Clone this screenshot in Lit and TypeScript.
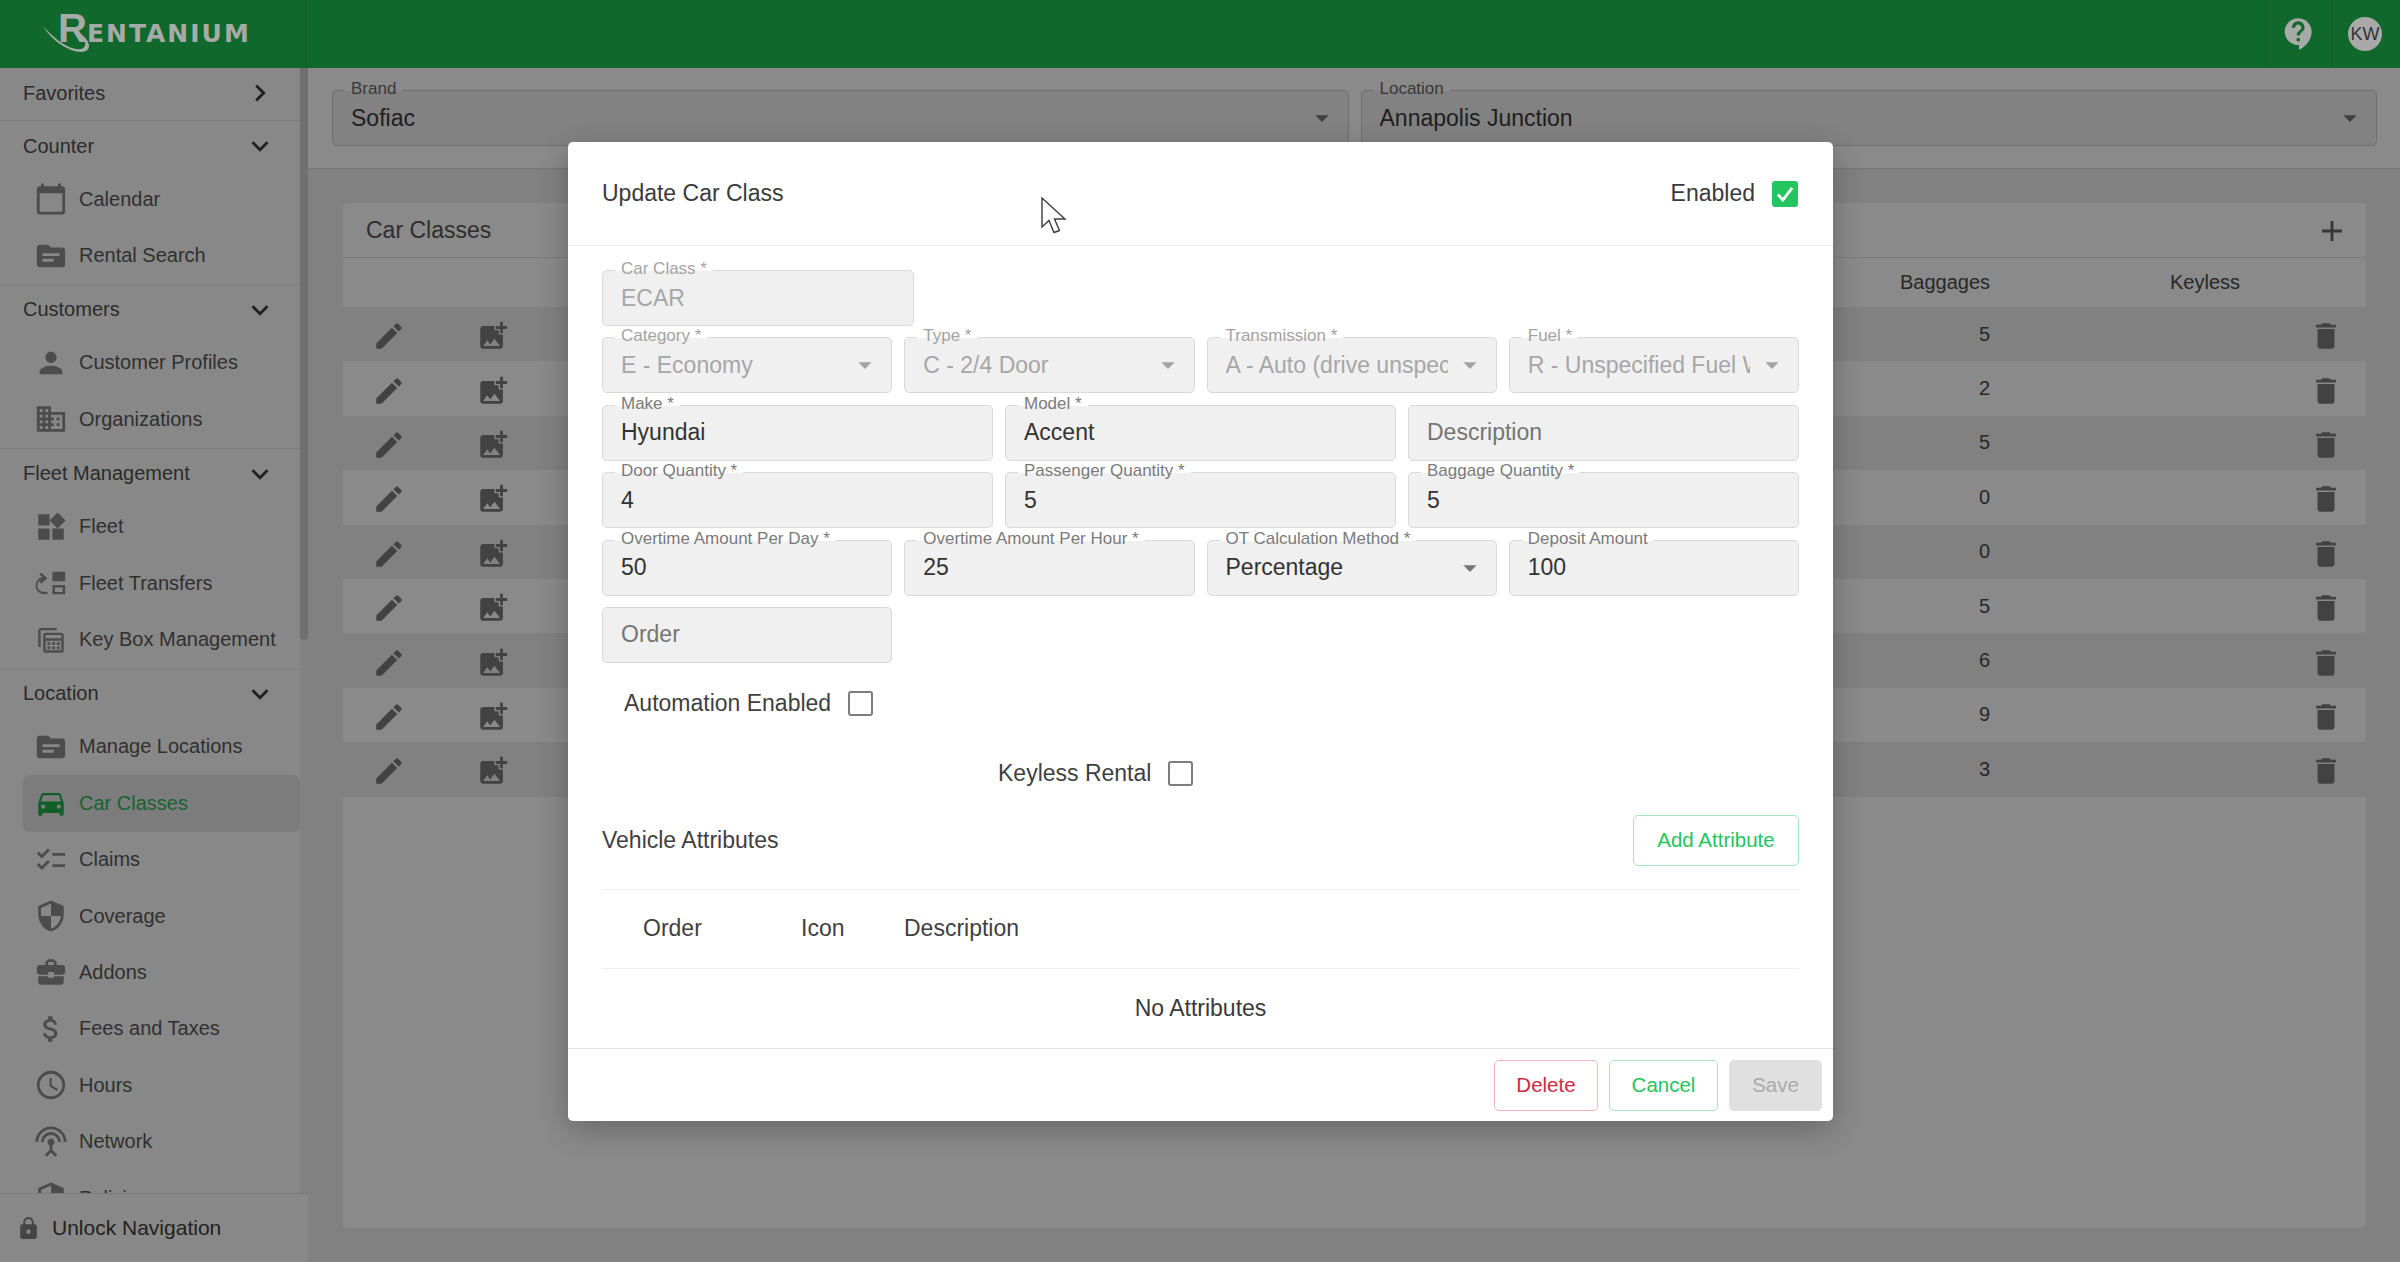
import {LitElement, html, css} from 'lit';
import {customElement} from 'lit/decorators.js';

const P: Record<string, string> = {
  right: 'M10 6 8.59 7.41 13.17 12l-4.58 4.59L10 18l6-6z',
  down: 'M16.59 8.59 12 13.17 7.41 8.59 6 10l6 6 6-6z',
  calendar: 'M20 3h-1V1h-2v2H7V1H5v2H4c-1.1 0-2 .9-2 2v16c0 1.1.9 2 2 2h16c1.1 0 2-.9 2-2V5c0-1.1-.9-2-2-2zm0 18H4V8h16v13z',
  topic: 'M20 6h-8l-2-2H4c-1.1 0-1.99.9-1.99 2L2 18c0 1.1.9 2 2 2h16c1.1 0 2-.9 2-2V8c0-1.1-.9-2-2-2zm-6 10H6v-2h8v2zm4-4H6v-2h12v2z',
  person: 'M12 12c2.21 0 4-1.79 4-4s-1.79-4-4-4-4 1.79-4 4 1.79 4 4 4zm0 2c-2.67 0-8 1.34-8 4v2h16v-2c0-2.66-5.33-4-8-4z',
  domain: 'M12 7V3H2v18h20V7H12zM6 19H4v-2h2v2zm0-4H4v-2h2v2zm0-4H4V9h2v2zm0-4H4V5h2v2zm4 12H8v-2h2v2zm0-4H8v-2h2v2zm0-4H8V9h2v2zm0-4H8V5h2v2zm10 12h-8v-2h2v-2h-2v-2h2v-2h-2V9h8v10zm-2-8h-2v2h2v-2zm0 4h-2v2h2v-2z',
  widgets: 'M13 13v8h8v-8h-8zM3 21h8v-8H3v8zM3 3v8h8V3H3zm13.66-1.31L11 7.34 16.66 13l5.66-5.66-5.66-5.65z',
  transfer: 'M13 4h9v6.8h-9zM13 13.4h9V20h-9zM14.8 15.1v3.2h5.4v-3.2zM9.5 18.2V20H7.4a6.2 6.2 0 0 1-1.6-12.2L3.9 6 5 4.6 9.4 8.6 5 12.6 3.9 11.2 5.6 9.6A4.4 4.4 0 0 0 7.4 18.2z',
  keybox: 'M16 3.5H5A2 2 0 0 0 3 5.5V17H4.7V5.2H16zM8.5 6.8h10.5a2 2 0 0 1 2 2V19a2 2 0 0 1-2 2H8.5a2 2 0 0 1-2-2V8.8a2 2 0 0 1 2-2zM8.2 8.5V10.8H19.3V8.5zM8.2 12.5V19.3H19.3V12.5zM9.5 13.5h2v2h-2zM12.9 13.5h2v2h-2zM16.2 13.5h2v2h-2zM9.5 16.5h2v2h-2zM12.9 16.5h2v2h-2zM16.2 16.5h2v2h-2z',
  car: 'M18.92 6.01C18.72 5.42 18.16 5 17.5 5h-11c-.66 0-1.21.42-1.42 1.01L3 12v8c0 .55.45 1 1 1h1c.55 0 1-.45 1-1v-1h12v1c0 .55.45 1 1 1h1c.55 0 1-.45 1-1v-8l-2.08-5.99zM6.5 16c-.83 0-1.5-.67-1.5-1.5S5.67 13 6.5 13s1.5.67 1.5 1.5S7.33 16 6.5 16zm11 0c-.83 0-1.5-.67-1.5-1.5s.67-1.5 1.5-1.5 1.5.67 1.5 1.5-.67 1.5-1.5 1.5zM5 11l1.5-4.5h11L19 11H5z',
  checklist: 'M22 7h-9v2h9V7zm0 8h-9v2h9v-2zM5.54 11 2 7.46l1.41-1.41 2.12 2.12 4.24-4.24 1.41 1.41L5.54 11zm0 8L2 15.46l1.41-1.41 2.12 2.12 4.24-4.24 1.41 1.41L5.54 19z',
  shield: 'M12 1 3 5v6c0 5.55 3.84 10.74 9 12 5.16-1.26 9-6.45 9-12V5l-9-4zm0 10.99h7c-.53 4.12-3.28 7.79-7 8.94V12H5V6.3l7-3.11v8.8z',
  case: 'M10 16v-1H3.01L3 19c0 1.11.89 2 2 2h14c1.11 0 2-.89 2-2v-4h-7v1h-4zm10-9h-4.01V5l-2-2h-4l-2 2v2H4c-1.1 0-2 .9-2 2v3c0 1.11.89 2 2 2h6v-2h4v2h6c1.1 0 2-.9 2-2V9c0-1.1-.9-2-2-2zm-6 0h-4V5h4v2z',
  money: 'M11.8 10.9c-2.27-.59-3-1.2-3-2.15 0-1.09 1.01-1.85 2.7-1.85 1.78 0 2.44.85 2.5 2.1h2.21c-.07-1.72-1.12-3.3-3.21-3.81V3h-3v2.16c-1.94.42-3.5 1.68-3.5 3.61 0 2.31 1.91 3.46 4.7 4.13 2.5.6 3 1.48 3 2.41 0 .69-.49 1.79-2.7 1.79-2.06 0-2.87-.92-2.98-2.1h-2.2c.12 2.19 1.76 3.42 3.68 3.83V21h3v-2.15c1.95-.37 3.5-1.5 3.5-3.55 0-2.84-2.43-3.81-4.7-4.4z',
  time: 'M11.99 2C6.47 2 2 6.48 2 12s4.47 10 9.99 10C17.52 22 22 17.52 22 12S17.52 2 11.99 2zM12 20c-4.42 0-8-3.58-8-8s3.58-8 8-8 8 3.58 8 8-3.58 8-8 8zm.5-13H11v6l5.25 3.15.75-1.23-4.5-2.67z',
  antenna: 'M12 5c-3.87 0-7 3.13-7 7h2c0-2.76 2.24-5 5-5s5 2.24 5 5h2c0-3.87-3.13-7-7-7zm1 9.29c.88-.39 1.5-1.26 1.5-2.29 0-1.38-1.12-2.5-2.5-2.5S9.5 10.62 9.5 12c0 1.02.62 1.9 1.5 2.29v3.3L7.59 21 9 22.41l3-3 3 3L16.41 21 13 17.59v-3.3zM12 1C5.93 1 1 5.93 1 12h2c0-4.97 4.03-9 9-9s9 4.03 9 9h2c0-6.07-4.93-11-11-11z',
  lock: 'M18 8h-1V6c0-2.76-2.24-5-5-5S7 3.24 7 6v2H6c-1.1 0-2 .9-2 2v10c0 1.1.9 2 2 2h12c1.1 0 2-.9 2-2V10c0-1.1-.9-2-2-2zm-6 9c-1.1 0-2-.9-2-2s.9-2 2-2 2 .9 2 2-.9 2-2 2zm3.1-9H8.9V6c0-1.71 1.39-3.1 3.1-3.1 1.71 0 3.1 1.39 3.1 3.1v2z',
  edit: 'M3 17.25V21h3.75L17.81 9.94l-3.75-3.75L3 17.25zM20.71 7.04c.39-.39.39-1.02 0-1.41l-2.34-2.34a.9959.9959 0 0 0-1.41 0l-1.83 1.83 3.75 3.75 1.83-1.83z',
  addPhoto: 'M19 7v2.99s-1.99.01-2 0V7h-3s.01-1.99 0-2h3V2h2v3h3v2h-3zm-3 4V8h-3V5H5c-1.1 0-2 .9-2 2v12c0 1.1.9 2 2 2h12c1.1 0 2-.9 2-2v-8h-3zM5 19l3-4 2 3 3-4 4 5H5z',
  trash: 'M6 19c0 1.1.9 2 2 2h8c1.1 0 2-.9 2-2V7H6v12zM19 4h-3.5l-1-1h-5l-1 1H5v2h14V4z',
  add: 'M19 13h-6v6h-2v-6H5v-2h6V5h2v6h6v2z',
  drop: 'M7 10l5 5 5-5z',
  help: 'M11.5 2C6.81 2 3 5.81 3 10.5S6.81 19 11.5 19h.5v3c4.86-2.34 8-7 8-11.5C20 5.81 16.19 2 11.5 2zm1 14.5h-2v-2h2v2zm0-3.5h-2c0-3.25 3-3 3-5 0-1.1-.9-2-2-2s-2 .9-2 2h-2c0-2.21 1.79-4 4-4s4 1.79 4 4c0 2.5-3 2.75-3 5z',
};

const icon = (name: string, cls = '') =>
  html`<svg class="icon ${cls}" viewBox="0 0 24 24"><path fill-rule="evenodd" d=${P[name]}></path></svg>`;

const NAV = [
  {title: 'Favorites', closed: true, items: []},
  {title: 'Counter', items: [['calendar', 'Calendar'], ['topic', 'Rental Search']]},
  {title: 'Customers', items: [['person', 'Customer Profiles'], ['domain', 'Organizations']]},
  {title: 'Fleet Management', items: [['widgets', 'Fleet'], ['transfer', 'Fleet Transfers'], ['keybox', 'Key Box Management']]},
  {title: 'Location', items: [
    ['topic', 'Manage Locations'], ['car', 'Car Classes'], ['checklist', 'Claims'], ['shield', 'Coverage'],
    ['case', 'Addons'], ['money', 'Fees and Taxes'], ['time', 'Hours'], ['antenna', 'Network'], ['shield', 'Policies'],
  ]},
];

const BAGGAGES = [5, 2, 5, 0, 0, 5, 6, 9, 3];

type F = {label?: string; value?: string; holder?: string; off?: boolean; select?: boolean};
const ROWS: F[][] = [
  [{label: 'Category *', value: 'E - Economy', off: true, select: true},
   {label: 'Type *', value: 'C - 2/4 Door', off: true, select: true},
   {label: 'Transmission *', value: 'A - Auto (drive unspecified)', off: true, select: true},
   {label: 'Fuel *', value: 'R - Unspecified Fuel With Air', off: true, select: true}],
  [{label: 'Make *', value: 'Hyundai'}, {label: 'Model *', value: 'Accent'}, {holder: 'Description'}],
  [{label: 'Door Quantity *', value: '4'}, {label: 'Passenger Quantity *', value: '5'}, {label: 'Baggage Quantity *', value: '5'}],
  [{label: 'Overtime Amount Per Day *', value: '50'}, {label: 'Overtime Amount Per Hour *', value: '25'},
   {label: 'OT Calculation Method *', value: 'Percentage', select: true}, {label: 'Deposit Amount', value: '100'}],
];

const field = (f: F) => html`
  <div class="field ${f.off ? 'off' : ''}">
    ${f.label ? html`<span class="flabel">${f.label}</span>` : ''}
    <span class="fvalue ${f.holder ? 'holder' : ''}">${f.value ?? f.holder}</span>
    ${f.select ? icon('drop', 'arrow') : ''}
  </div>`;

@customElement('app-root')
export class AppRoot extends LitElement {
  static styles = css`
    :host {
      display: block;
      position: relative;
      width: 2400px;
      height: 1262px;
      overflow: hidden;
      font-family: "Liberation Sans", Arial, sans-serif;
      color: #555;
    }
    .icon { width: 34px; height: 34px; fill: currentColor; flex: none; display: block; }

    /* top bar stays above the scrim, the recording shows it less dimmed */
    .top {
      position: relative;
      z-index: 2;
      height: 68px;
      background: #10682c;
      display: flex;
      align-items: center;
    }
    .brandbox { width: 307px; height: 100%; border-right: 1px solid #0e5f28; flex: none; display: flex; align-items: center; padding-left: 58px; box-sizing: border-box; }
    .logo { position: relative; display: flex; align-items: baseline; color: #a7aba7; font-weight: 700; margin-top: -12px; }
    .logo .r { font-size: 40px; line-height: 40px; }
    .logo .rest { font-family: "DejaVu Sans", sans-serif; font-size: 25px; letter-spacing: 2px; }
    .swoosh { position: absolute; left: -15px; top: 0; width: 60px; height: 54px; fill: #a7aba7; }
    .top-space { flex: 1; }
    .top-cell { width: 66px; height: 100%; border-left: 1px solid #0e5f28; display: flex; align-items: center; justify-content: center; box-sizing: border-box; }
    .help { color: #a7aba7; width: 38px; height: 38px; }
    .avatar { width: 34px; height: 34px; border-radius: 50%; background: #a9a9a9; color: #333; font-size: 18px; display: flex; align-items: center; justify-content: center; margin-left: 1px; }

    .body { display: flex; height: 1194px; }

    .side { width: 308px; flex: none; background: #fcfcfc; display: flex; flex-direction: column; }
    .scroller { height: 1125px; display: flex; overflow: hidden; }
    .nav { width: 300px; flex: none; }
    .track { width: 8px; flex: none; background: #eee; }
    .thumb { height: 572px; background: #cfcfcf; border-radius: 0 0 4px 4px; }
    .sec { border-bottom: 1px solid #eaeaea; }
    .sec.first { padding-bottom: 2px; }
    .sec-head { height: 50px; padding: 0 23px; display: flex; align-items: center; justify-content: space-between; font-size: 20px; color: #505050; }
    .sec-head .icon { color: #3c3c3c; }
    .item { height: 56.4px; margin-left: 23px; padding-left: 11px; display: flex; align-items: center; gap: 11px; font-size: 20px; color: #595959; border-radius: 6px; }
    .item .icon { color: #8c8c8c; }
    .item.on { background: #e6e6e6; color: #2fb85a; }
    .item.on .icon { color: #1fb04c; }
    .unlock { flex: 1; border-top: 1px solid #e0e0e0; display: flex; align-items: center; padding-left: 16px; gap: 11px; font-size: 21px; color: #404040; }
    .unlock .icon { width: 25px; height: 25px; color: #808080; }

    .main { flex: 1; background: #eee; display: flex; flex-direction: column; }
    .filters { height: 101px; padding: 22px 23px 0 24px; box-sizing: border-box; background: #fff; border-bottom: 1px solid #d8d8d8; display: flex; gap: 12px; flex: none; }
    .filters .field { --up: #fff; --down: #f0f0f0; flex: 1; border: 1px solid #cdcdcd; color: #3a3a3a; }
    .filters .flabel { color: #6a6a6a; }
    .filters .arrow { color: #777; }

    .card { margin: 34px 34px 0 35px; height: 1025px; background: #fff; border-radius: 4px; }
    .card-head { height: 53px; border-bottom: 1px solid #e3e3e3; display: flex; align-items: center; justify-content: space-between; padding: 1px 23px 0; box-sizing: content-box; font-size: 23px; color: #555; margin-bottom: -1px; }
    .card-head .icon { color: #666; margin-right: -6px; }
    .grid { display: grid; grid-template-columns: 92px 116px 1fr 250px 46px 80px; align-items: center; justify-items: center; font-size: 20px; color: #4a4a4a; }
    .cols { height: 50px; }
    .r { justify-self: end; }
    .row { height: 54.4px; }
    .row:nth-child(odd) { background: #eee; }
    .row .icon { color: #7a7a7a; margin-top: 4px; }

    .scrim { position: absolute; inset: 0; background: rgba(0, 0, 0, .46); z-index: 1; }

    .modal {
      position: absolute;
      z-index: 3;
      left: 568px;
      top: 142px;
      width: 1265px;
      height: 979px;
      background: #fff;
      border-radius: 5px;
      box-sizing: border-box;
      display: flex;
      flex-direction: column;
      color: #3a3a3a;
      box-shadow: 0 8px 30px rgba(0, 0, 0, .25);
    }
    .m-head { height: 104px; flex: none; box-sizing: border-box; border-bottom: 1px solid #ececec; padding: 0 35px 0 34px; display: flex; align-items: center; justify-content: space-between; font-size: 23px; }
    .enabled { display: flex; align-items: center; gap: 17px; font-size: 23px; }
    .check { width: 26px; height: 26px; border-radius: 3px; background: #22c55e; display: flex; align-items: center; justify-content: center; }
    .check svg { width: 22px; height: 22px; fill: none; stroke: #fff; stroke-width: 2.6; }
    .box { width: 25px; height: 25px; box-sizing: border-box; border: 2.5px solid #7d7d7d; border-radius: 3px; flex: none; }
    .m-body { flex: 1; padding: 24px 34px 0; display: flex; flex-direction: column; }
    .form { display: flex; flex-direction: column; gap: 11.4px; }
    .frow { display: flex; gap: 12px; }
    .frow .field { flex: 1 1 0; min-width: 0; }
    .frow.one .field { flex: none; width: 312px; }
    .frow.order .field { flex: none; width: 290px; }

    .field {
      --up: #fff;
      --down: #f0f0f0;
      position: relative;
      height: 56px;
      box-sizing: border-box;
      background: var(--down);
      border: 1.5px solid #d9d9d9;
      border-radius: 5px;
      padding: 0 18px;
      display: flex;
      align-items: center;
      font-size: 23px;
      color: #333;
    }
    .flabel {
      position: absolute;
      left: 12px;
      top: -12px;
      padding: 0 6px;
      line-height: 20px;
      font-size: 17px;
      color: #7a7a7a;
      white-space: nowrap;
      background: linear-gradient(var(--up) 60%, var(--down) 60%);
    }
    .fvalue { flex: 1; overflow: hidden; white-space: nowrap; min-width: 0; }
    .holder { color: #757575; }
    .arrow { width: 32px; height: 32px; color: #777; margin-right: -8px; margin-left: 6px; }
    .field.off { color: #a6a6a6; }
    .field.off .flabel { color: #a3a3a3; }
    .field.off .arrow { color: #a3a3a3; }

    .opt { display: flex; align-items: center; gap: 17px; font-size: 23px; color: #3f3f3f; }
    .auto { margin: 28px 0 0 22px; height: 26px; }
    .keyless { margin: 44px 0 0 396px; height: 26px; }
    .attr-head { margin-top: 28px; display: flex; align-items: center; justify-content: space-between; font-size: 23px; color: #3f3f3f; padding-bottom: 23px; border-bottom: 1.5px solid #efefef; }
    .btn { height: 51px; box-sizing: border-box; border: 1.5px solid #a5e6bd; border-radius: 5px; background: #fff; color: #22c55e; font-size: 20.5px; display: flex; align-items: center; justify-content: center; }
    .btn.add { width: 166px; }
    .attr-cols { height: 79px; box-sizing: border-box; border-bottom: 1.5px solid #efefef; padding-left: 41px; display: grid; grid-template-columns: 158px 103px 1fr; align-items: center; font-size: 23px; color: #3f3f3f; }
    .none { height: 79px; display: flex; align-items: center; justify-content: center; font-size: 23px; color: #3a3a3a; }
    .m-foot { height: 74px; flex: none; box-sizing: border-box; border-top: 1.5px solid #e3e3e3; padding: 11px 11px 0 0; display: flex; justify-content: flex-end; gap: 11px; }
    .btn.del { width: 104px; border-color: #eeb3bf; color: #d0293f; }
    .btn.can { width: 109px; }
    .btn.save { width: 93px; background: #e0e0e0; border-color: #e0e0e0; color: #aaa; }
    .cursor { position: absolute; left: 473px; top: 55px; width: 26px; height: 38px; }
  `;

  protected render() {
    return html`
      <div class="top">
        <div class="brandbox">
          <div class="logo">
            <svg class="swoosh" viewBox="0 0 60 54"><path d="M0 18C12 32 28 43 38 41 44 40 44 32 36 25 48 32 50 44 38 44 26 44 8 32 0 18Z"></path></svg>
            <span class="r">R</span><span class="rest">ENTANIUM</span>
          </div>
        </div>
        <div class="top-space"></div>
        <div class="top-cell">${icon('help', 'help')}</div>
        <div class="top-cell"><div class="avatar">KW</div></div>
        <div style="width:3px"></div>
      </div>
      <div class="body">
        <aside class="side">
          <div class="scroller">
            <div class="nav">
              ${NAV.map((s, i) => html`
                <div class="sec ${i === 0 ? 'first' : ''}">
                  <div class="sec-head">${s.title}${icon(s.closed ? 'right' : 'down')}</div>
                  ${s.items.map(([ic, label]) => html`
                    <div class="item ${label === 'Car Classes' ? 'on' : ''}">${icon(ic)}${label}</div>`)}
                </div>`)}
            </div>
            <div class="track"><div class="thumb"></div></div>
          </div>
          <div class="unlock">${icon('lock')}Unlock Navigation</div>
        </aside>
        <main class="main">
          <div class="filters">
            ${field({label: 'Brand', value: 'Sofiac', select: true})}
            ${field({label: 'Location', value: 'Annapolis Junction', select: true})}
          </div>
          <section class="card">
            <div class="card-head">Car Classes${icon('add')}</div>
            <div class="grid cols">
              <span></span><span></span><span class="r">Baggages</span><span class="r">Keyless</span><span></span><span></span>
            </div>
            <div>
              ${BAGGAGES.map(n => html`
                <div class="grid row">
                  ${icon('edit')}${icon('addPhoto')}
                  <span class="r">${n}</span><span></span><span></span>${icon('trash')}
                </div>`)}
            </div>
          </section>
        </main>
      </div>
      <div class="scrim"></div>
      <div class="modal">
        <div class="m-head">
          <span>Update Car Class</span>
          <span class="enabled">Enabled
            <span class="check"><svg viewBox="0 0 20 20"><path d="M3.5 10.5 8 15.5 16.5 4.5"></path></svg></span>
          </span>
        </div>
        <div class="m-body">
          <div class="form">
            <div class="frow one">${field({label: 'Car Class *', value: 'ECAR', off: true})}</div>
            ${ROWS.map(r => html`<div class="frow">${r.map(field)}</div>`)}
            <div class="frow order">${field({holder: 'Order'})}</div>
          </div>
          <div class="opt auto">Automation Enabled<span class="box"></span></div>
          <div class="opt keyless">Keyless Rental<span class="box"></span></div>
          <div class="attr-head">Vehicle Attributes<div class="btn add">Add Attribute</div></div>
          <div class="attr-cols"><span>Order</span><span>Icon</span><span>Description</span></div>
          <div class="none">No Attributes</div>
        </div>
        <div class="m-foot">
          <div class="btn del">Delete</div>
          <div class="btn can">Cancel</div>
          <div class="btn save">Save</div>
        </div>
        <svg class="cursor" viewBox="0 0 26 38"><path d="M1 1V30L8 23.5 13 35.5 18.5 33.5 13.5 22H24Z" fill="#fff" stroke="#3c3c3c" stroke-width="1.4"></path></svg>
      </div>
    `;
  }
}
